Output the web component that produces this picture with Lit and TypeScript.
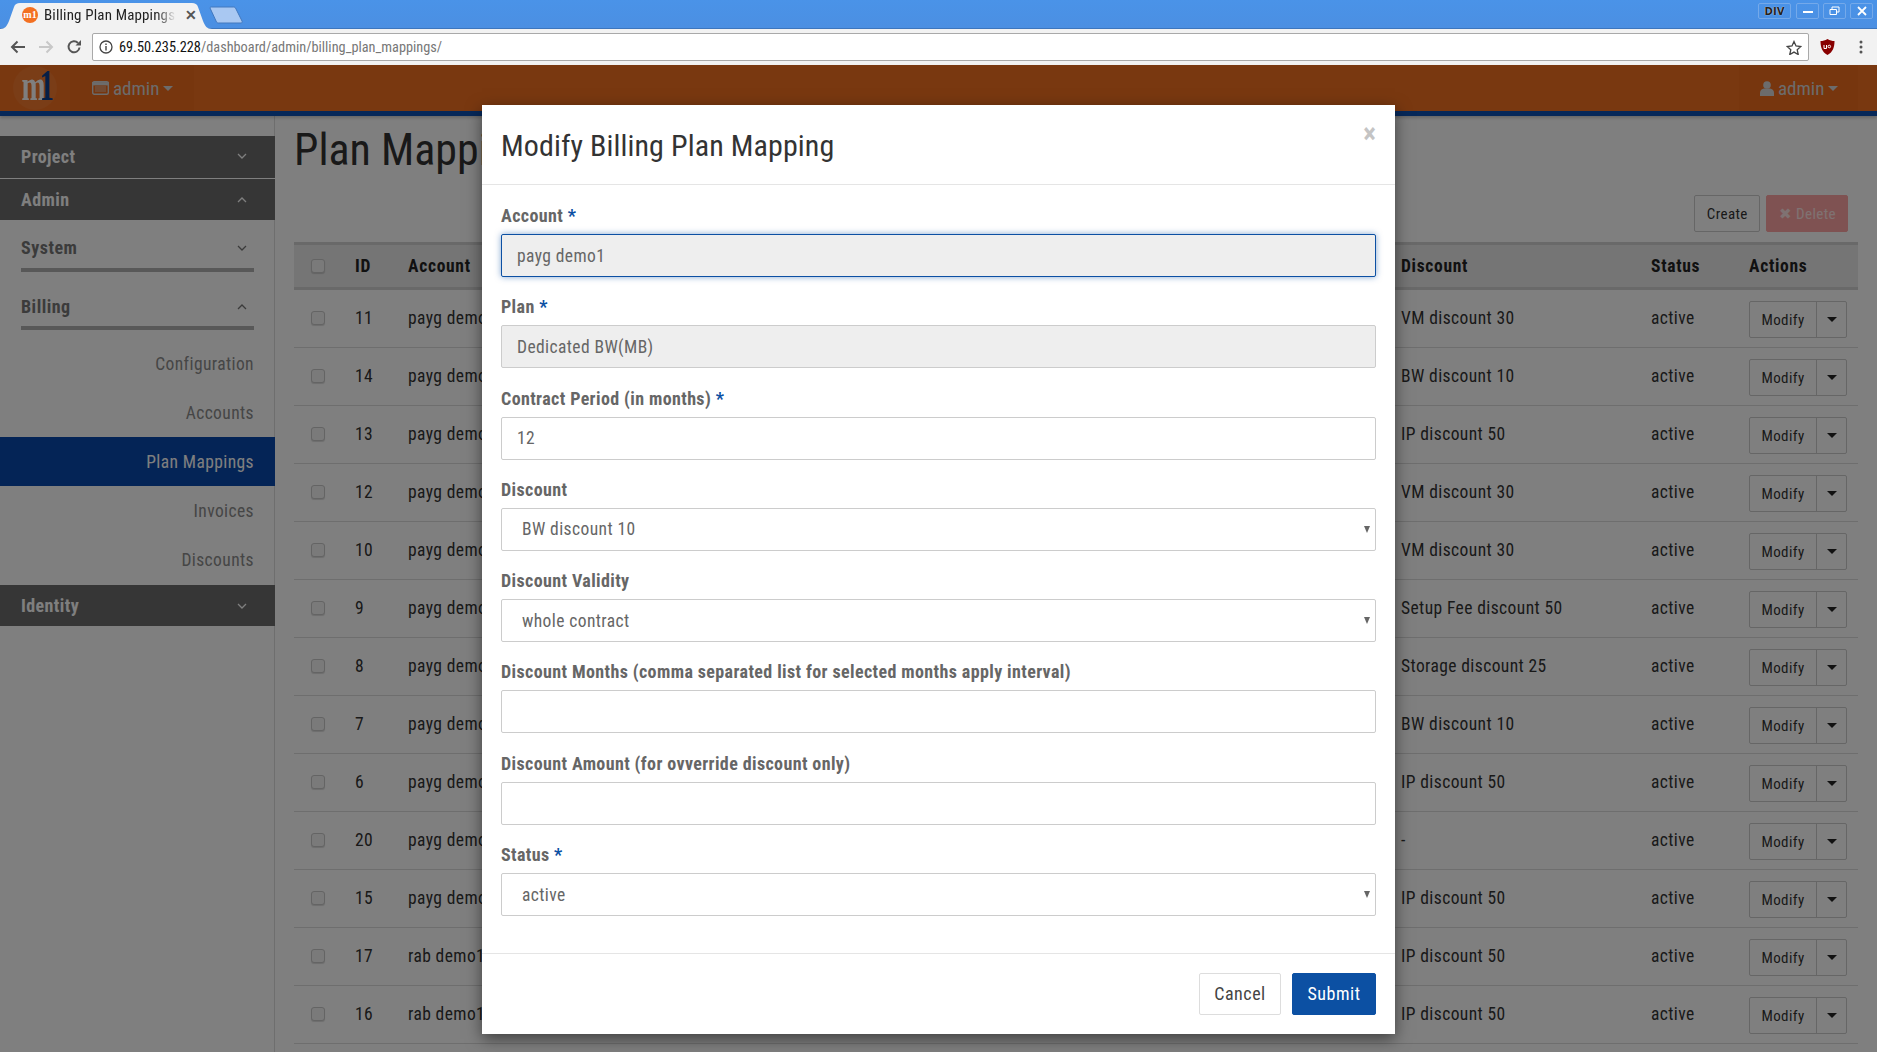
import { LitElement, html, css, svg } from 'lit';
import { customElement } from 'lit/decorators.js';

const ROWS: [string, string, string][] = [
  ['11', 'payg demo1', 'VM discount 30'],
  ['14', 'payg demo1', 'BW discount 10'],
  ['13', 'payg demo1', 'IP discount 50'],
  ['12', 'payg demo1', 'VM discount 30'],
  ['10', 'payg demo1', 'VM discount 30'],
  ['9', 'payg demo1', 'Setup Fee discount 50'],
  ['8', 'payg demo1', 'Storage discount 25'],
  ['7', 'payg demo1', 'BW discount 10'],
  ['6', 'payg demo1', 'IP discount 50'],
  ['20', 'payg demo1', '-'],
  ['15', 'payg demo1', 'IP discount 50'],
  ['17', 'rab demo1', 'IP discount 50'],
  ['16', 'rab demo1', 'IP discount 50'],
];

const chevDown = svg`<path d="M1 1l4 4 4-4" fill="none" stroke="currentColor" stroke-width="1.3"/>`;
const chevUp = svg`<path d="M1 5l4-4 4 4" fill="none" stroke="currentColor" stroke-width="1.3"/>`;

@customElement('app-root')
export class AppRoot extends LitElement {
  static styles = css`
    :host {
      display: block;
      position: relative;
      height: 1052px;
      overflow: hidden;
      background: #fff;
      font-family: 'Roboto Condensed', 'Liberation Sans Narrow', Roboto, sans-serif;
      font-stretch: 75%;
      font-size: 16px;
      color: #333;
    }
    * { box-sizing: border-box; }

    /* browser chrome */
    .tabstrip {
      height: 29px;
      background: linear-gradient(#4a93e8, #4b8fe2);
      border-bottom: 1px solid #3d76bd;
      display: flex;
      align-items: flex-end;
      justify-content: space-between;
      font-family: Roboto, sans-serif;
    }
    .tabs { display: flex; align-items: flex-end; }
    .tab {
      position: relative;
      width: 212px;
      height: 27px;
      margin-bottom: -1px;
      display: flex;
      align-items: center;
      padding: 0 0 2px 22px;
      color: #222;
    }
    .tab svg.shape { position: absolute; left: 0; top: 0; }
    .tab > span { position: relative; }
    .fav {
      width: 16px; height: 16px; border-radius: 50%; background: #f37021; color: #fff;
      font: bold 10px/15px 'Liberation Serif', serif; text-align: center; margin-right: 6px; flex: none;
    }
    .tabtitle {
      width: 132px; white-space: nowrap; overflow: hidden;
      -webkit-mask-image: linear-gradient(90deg, #000 85%, transparent);
      font-family: 'Roboto Condensed', 'Liberation Sans Narrow', Roboto, sans-serif; font-stretch: 75%;
      font-size: 15px;
      letter-spacing: .15px;
    }
    .tabclose { margin-left: 9px; font-size: 14px; font-weight: 700; color: #555; }
    .newtab { margin: 0 0 4px -3px; }
    .winbtns { display: flex; align-self: flex-start; gap: 4px; padding: 3px 4px 0 0; }
    .wb {
      height: 16px; width: 23px; border: 1px solid #74a9ea; border-radius: 2px; display: flex;
      align-items: center; justify-content: center; color: #fff;
    }
    .wb.div { width: 33px; margin-right: 1px; font: bold 10px 'DejaVu Sans', sans-serif; color: #222; text-shadow: 0 0 1px #fff; }

    .toolbar {
      height: 36px;
      background: #f2f2f2;
      display: flex;
      align-items: center;
      padding: 0 0 0 10px;
    }
    .toolbar .nav { display: flex; gap: 12px; width: 82px; align-items: center; }
    .urlbar {
      width: 1717px; height: 28px; background: #fff; border: 1px solid #a9a9a9; border-radius: 2px;
      display: flex; align-items: center; padding: 0 6px 0 6px; font-size: 14.3px; color: #777;
    }
    .urlbar b { font-weight: 400; color: #111; }
    .urlbar .info { margin-right: 6px; flex: none; }
    .urlbar .star { margin-left: auto; }
    .ext { margin-left: 11px; flex: none; }
    .dots { margin-left: 24px; flex: none; }

    /* app header */
    .header {
      position: relative;
      height: 51px;
      background: #f37021;
      border-bottom: 5px solid #0c50b2;
      box-shadow: 0 2px 3px rgba(0,0,0,.2);
      display: flex;
      justify-content: space-between;
      color: #d8d8d8;
      font-size: 19px;
    }
    .hleft { display: flex; }
    .brand {
      width: 70px; display: flex; align-items: center; justify-content: center;
    }
    .logo {
      width: 44px; height: 44px; border-radius: 50%; background: #f57a2e;
      font: bold 36px/38px 'Liberation Serif', serif; text-align: center; color: #fff; letter-spacing: -7px;
      white-space: nowrap;
    }
    .logo span { display: inline-block; transform: scale(.8, 1.25); }
    .logo i { font-style: normal; color: #0c3f8f; }
    .hmenu {
      display: flex; align-items: center; gap: 4px; height: 46px; background: #ee6c1d;
    }
    .hmenu.left { width: 124px; padding-left: 22px; }
    .hmenu.right { width: 119px; margin-right: 19px; padding-left: 21px; }
    .caret { display: block; width: 0; height: 0; border: 5px solid transparent; border-top-color: currentColor; border-bottom: 0; }

    /* page */
    .page { display: flex; height: 936px; }
    .sidebar { width: 275px; flex: none; box-shadow: inset -1px 0 #dcdcdc; padding-top: 20px; }
    .sec {
      height: 42px; background: #6c6c6c; color: #fff; font-weight: 700; padding: 0 21px 2px; display: flex;
      align-items: center; justify-content: space-between; font-size: 18px; letter-spacing: .4px;
    }
    .sec + .sec { border-top: 1px solid #fff; padding-bottom: 0; }
    .sec svg, .sub svg { margin-right: 7px; }
    .sub {
      margin: 0 21px; color: #777; font-weight: 700; font-size: 18px; letter-spacing: .5px;
      display: flex; align-items: flex-start; justify-content: space-between; border-bottom: 4px solid #b0b0b0;
    }
    .sub.first { margin-top: 17px; height: 35px; margin-bottom: 24px; }
    .sub.second { height: 34px; margin-bottom: 9px; }
    .link {
      height: 49px; display: flex; align-items: center; justify-content: flex-end; padding-right: 21px;
      color: #8c8c8c; font-size: 17.5px; letter-spacing: .4px;
    }
    .link.active { background: #0849ad; color: #fff; }
    .sec.last { height: 41px; margin-top: 1px; padding-bottom: 0; }

    .content { flex: 1; padding: 4px 19px 0 19px; min-width: 0; }
    h1 { margin: 0; font-weight: 400; font-size: 44px; line-height: 60px; color: #333; }
    .actions { display: flex; justify-content: flex-end; gap: 6px; padding: 15px 10px 0 0; height: 62px; }
    .btn {
      height: 37px; padding: 0 11px 0 12px; border: 1px solid #ccc; border-radius: 2px; background: #fff; color: #333;
      display: flex; align-items: center; font-size: 15px; letter-spacing: .4px;
    }
    .btn.del { background: #ffa4a4; border-color: #ffa4a4; color: #ffe4e4; }
    .row {
      display: grid;
      grid-template-columns: 61px 53px 993px 250px 98px 109px;
      align-items: center;
      height: 58px;
      padding-bottom: 2px;
      border-bottom: 1px solid #ddd;
    }
    .row.head { height: 48px; padding-bottom: 0; background: #eaeaea; border-top: 3px solid #d2d2d2; border-bottom: 3px solid #d2d2d2; font-weight: 700; font-size: 17.5px; letter-spacing: .7px; color: #222; }
    .row:not(.head) { font-size: 17.5px; letter-spacing: .4px; }
    .chk {
      display: block; width: 14px; height: 14px; margin-left: 17px; border: 1px solid #c8c8c8; border-radius: 3px; background: #f4f4f4;
      box-shadow: 0 1px 1px rgba(0,0,0,.15);
    }
    .group { display: flex; width: 98px; height: 37px; border: 1px solid #ccc; border-radius: 2px; margin-top: 4px; font-size: 15px; letter-spacing: .4px; }
    .group span { display: flex; align-items: center; justify-content: center; }
    .group .m { width: 67px; border-right: 1px solid #ccc; }
    .group .c { width: 29px; color: #222; }

    /* overlay + modal */
    .backdrop { position: absolute; left: 0; right: 0; top: 65px; bottom: 0; background: rgba(0,0,0,.5); }
    .modal {
      position: absolute; left: 482px; top: 105px; width: 913px; height: 929px; background: #fff;
      box-shadow: 0 5px 15px rgba(0,0,0,.5);
      display: flex; flex-direction: column;
    }
    .mhead {
      height: 80px; border-bottom: 1px solid #e5e5e5; padding: 2px 19px 0; display: flex; align-items: center; justify-content: space-between;
    }
    .mhead h4 { margin: 0; font-size: 30px; font-weight: 400; color: #333; letter-spacing: .1px; }
    .close { font-size: 27px; font-weight: 700; color: #c4c4c4; margin: -24px 0 0 0; }
    .mbody { padding: 16px 19px 0; flex: 1; }
    .field { height: 91.3px; }
    label { display: block; font-weight: 700; color: #666; font-size: 18px; letter-spacing: .38px; height: 29px; line-height: 29px; margin-bottom: 4px; }
    label em { font-style: normal; color: #0c50a3; }
    input, select {
      display: block; width: 100%; height: 43px; border: 1px solid #ccc; border-radius: 2px; background: #fff;
      font: inherit; font-stretch: 75%; font-size: 17.5px; letter-spacing: .4px; color: #666; padding: 0 15px; outline: none;
      appearance: none; -webkit-appearance: none;
    }
    input[readonly] { background: #eee; }
    input.focus { border-color: #0c50a3; box-shadow: 0 0 6px rgba(12,80,163,.5); }
    select { padding-left: 20px; }
    .sel { position: relative; }
    .sel::after {
      content: ''; position: absolute; right: 6px; top: 18px; border: 3.5px solid transparent; border-top: 7px solid #666; border-bottom: 0;
    }
    .mfoot {
      height: 81px; border-top: 1px solid #e5e5e5; padding: 19px 19px 0; display: flex; justify-content: flex-end; gap: 11px;
    }
    .mbtn { height: 42px; padding-bottom: 2px; border: 1px solid #ddd; border-radius: 2px; display: flex; align-items: center; justify-content: center; font-size: 18px; letter-spacing: .5px; color: #444; width: 82px; }
    .mbtn.primary { width: 84px; background: #0c50a3; border-color: #0c50a3; color: #fff; }
  `;

  private _field(name: string, req: boolean, value: string, cls = '', ro = false) {
    return html`<div class="field">
      <label>${name}${req ? html` <em>*</em>` : ''}</label>
      <input class=${cls} .value=${value} ?readonly=${ro} />
    </div>`;
  }

  private _select(name: string, req: boolean, value: string) {
    return html`<div class="field">
      <label>${name}${req ? html` <em>*</em>` : ''}</label>
      <div class="sel"><select><option>${value}</option></select></div>
    </div>`;
  }

  render() {
    return html`
      <div class="tabstrip">
        <div class="tabs">
          <div class="tab">
            <svg class="shape" width="212" height="27"><path d="M0 27C5 27 7 24 9 19L14 5C15 2 17 1 20 1H192C195 1 197 2 198 5L203 19C205 24 207 27 212 27Z" fill="#f2f2f2"/></svg>
            <span class="fav">m1</span>
            <span class="tabtitle">Billing Plan Mappings</span>
            <span class="tabclose">✕</span>
          </div>
          <svg class="newtab" width="36" height="18"><path d="M1 2C1 1 2 1 3 1H24C25 1 26 1 26.500 2L33 15C33.500 16 33 17 32 17H10C9 17 8 17 7.500 16Z" fill="#a9c8f2" stroke="#4278be"/></svg>
        </div>
        <div class="winbtns">
          <div class="wb div">DIV</div>
          <div class="wb"><svg width="10" height="10"><path d="M0 6h10" stroke="#fff" stroke-width="2"/></svg></div>
          <div class="wb"><svg width="11" height="10"><path d="M3 3V1h7v5H8M1 3.500h6.500v5H1z" fill="none" stroke="#fff"/></svg></div>
          <div class="wb"><svg width="10" height="10"><path d="M1 1l8 8M9 1l-8 8" stroke="#fff" stroke-width="1.800"/></svg></div>
        </div>
      </div>
      <div class="toolbar">
        <div class="nav">
          <svg width="16" height="14"><path d="M15 7H2M7.500 1.500L2 7l5.500 5.500" fill="none" stroke="#555" stroke-width="2"/></svg>
          <svg width="16" height="14"><path d="M1 7h13M8.500 1.500L14 7l-5.500 5.500" fill="none" stroke="#c8c8c8" stroke-width="2"/></svg>
          <svg width="16" height="16"><path d="M13.500 8.500A5.500 5.500 0 1 1 12 4" fill="none" stroke="#555" stroke-width="2"/><path d="M9.500 6.500H15V1z" fill="#555"/></svg>
        </div>
        <div class="urlbar">
          <svg class="info" width="14" height="14"><circle cx="7" cy="7" r="6" fill="none" stroke="#444" stroke-width="1.300"/><path d="M7 6v4.500M7 3.500v1.400" stroke="#444" stroke-width="1.400"/></svg>
          <span><b>69.50.235.228</b>/dashboard/admin/billing_plan_mappings/</span>
          <svg class="star" width="16" height="15"><path d="M8 1.500l2 4.500 4.800.5-3.600 3.200 1 4.800L8 12.100 3.800 14.500l1-4.800L1.200 6.500 6 6z" fill="none" stroke="#444" stroke-width="1.300"/></svg>
        </div>
        <svg class="ext" width="15" height="16"><path d="M7.500 0C5 1.500 3 2 .5 2c0 6 1.500 11 7 14 5.500-3 7-8 7-14C12 2 10 1.500 7.500 0z" fill="#800"/><path d="M4 6v3.500h2.500V6M8 7.500a1.300 1.300 0 1 0 2.600 0 1.300 1.300 0 1 0-2.600 0" fill="none" stroke="#fff" stroke-width="1"/></svg>
        <svg class="dots" width="4" height="14"><circle cx="2" cy="2" r="1.500" fill="#555"/><circle cx="2" cy="7" r="1.500" fill="#555"/><circle cx="2" cy="12" r="1.500" fill="#555"/></svg>
      </div>
      <div class="header">
        <div class="hleft">
          <div class="brand"><div class="logo"><span>m<i>1</i></span></div></div>
          <div class="hmenu left">
            <svg width="17" height="14"><rect x=".7" y=".7" width="15.600" height="12.600" rx="1.500" fill="none" stroke="currentColor" stroke-width="1.400"/><path d="M0 1.500h17v2.500H0zM3 6h11M3 8h11M3 10h11" fill="currentColor" stroke="currentColor" stroke-width=".8"/></svg>
            admin <span class="caret"></span>
          </div>
        </div>
        <div class="hmenu right">
          <svg width="14" height="15"><circle cx="7" cy="4" r="3.800" fill="currentColor"/><path d="M0 15v-3.500C0 9 2 8 4 7.500h6C12 8 14 9 14 11.500V15z" fill="currentColor"/></svg>
          admin <span class="caret"></span>
        </div>
      </div>
      <div class="page">
        <div class="sidebar">
          <div class="sec">Project <svg width="10" height="6">${chevDown}</svg></div>
          <div class="sec">Admin <svg width="10" height="6">${chevUp}</svg></div>
          <div class="sub first">System <svg width="10" height="6" style="margin-top:8px">${chevDown}</svg></div>
          <div class="sub second">Billing <svg width="10" height="6" style="margin-top:8px">${chevUp}</svg></div>
          <div class="link">Configuration</div>
          <div class="link">Accounts</div>
          <div class="link active">Plan Mappings</div>
          <div class="link">Invoices</div>
          <div class="link">Discounts</div>
          <div class="sec last">Identity <svg width="10" height="6">${chevDown}</svg></div>
        </div>
        <div class="content">
          <h1>Plan Mappings</h1>
          <div class="actions">
            <div class="btn">Create</div>
            <div class="btn del">✖&nbsp;Delete</div>
          </div>
          <div class="row head">
            <span class="chk"></span><span>ID</span><span>Account</span><span>Discount</span><span>Status</span><span>Actions</span>
          </div>
          ${ROWS.map(r => html`
            <div class="row">
              <span class="chk"></span><span>${r[0]}</span><span>${r[1]}</span><span>${r[2]}</span><span>active</span>
              <div class="group"><span class="m">Modify</span><span class="c"><i class="caret"></i></span></div>
            </div>`)}
        </div>
      </div>
      <div class="backdrop"></div>
      <div class="modal">
        <div class="mhead">
          <h4>Modify Billing Plan Mapping</h4>
          <span class="close">×</span>
        </div>
        <div class="mbody">
          ${this._field('Account', true, 'payg demo1', 'focus', true)}
          ${this._field('Plan', true, 'Dedicated BW(MB)', '', true)}
          ${this._field('Contract Period (in months)', true, '12')}
          ${this._select('Discount', false, 'BW discount 10')}
          ${this._select('Discount Validity', false, 'whole contract')}
          ${this._field('Discount Months (comma separated list for selected months apply interval)', false, '')}
          ${this._field('Discount Amount (for ovverride discount only)', false, '')}
          ${this._select('Status', true, 'active')}
        </div>
        <div class="mfoot">
          <div class="mbtn">Cancel</div>
          <div class="mbtn primary">Submit</div>
        </div>
      </div>
    `;
  }
}
